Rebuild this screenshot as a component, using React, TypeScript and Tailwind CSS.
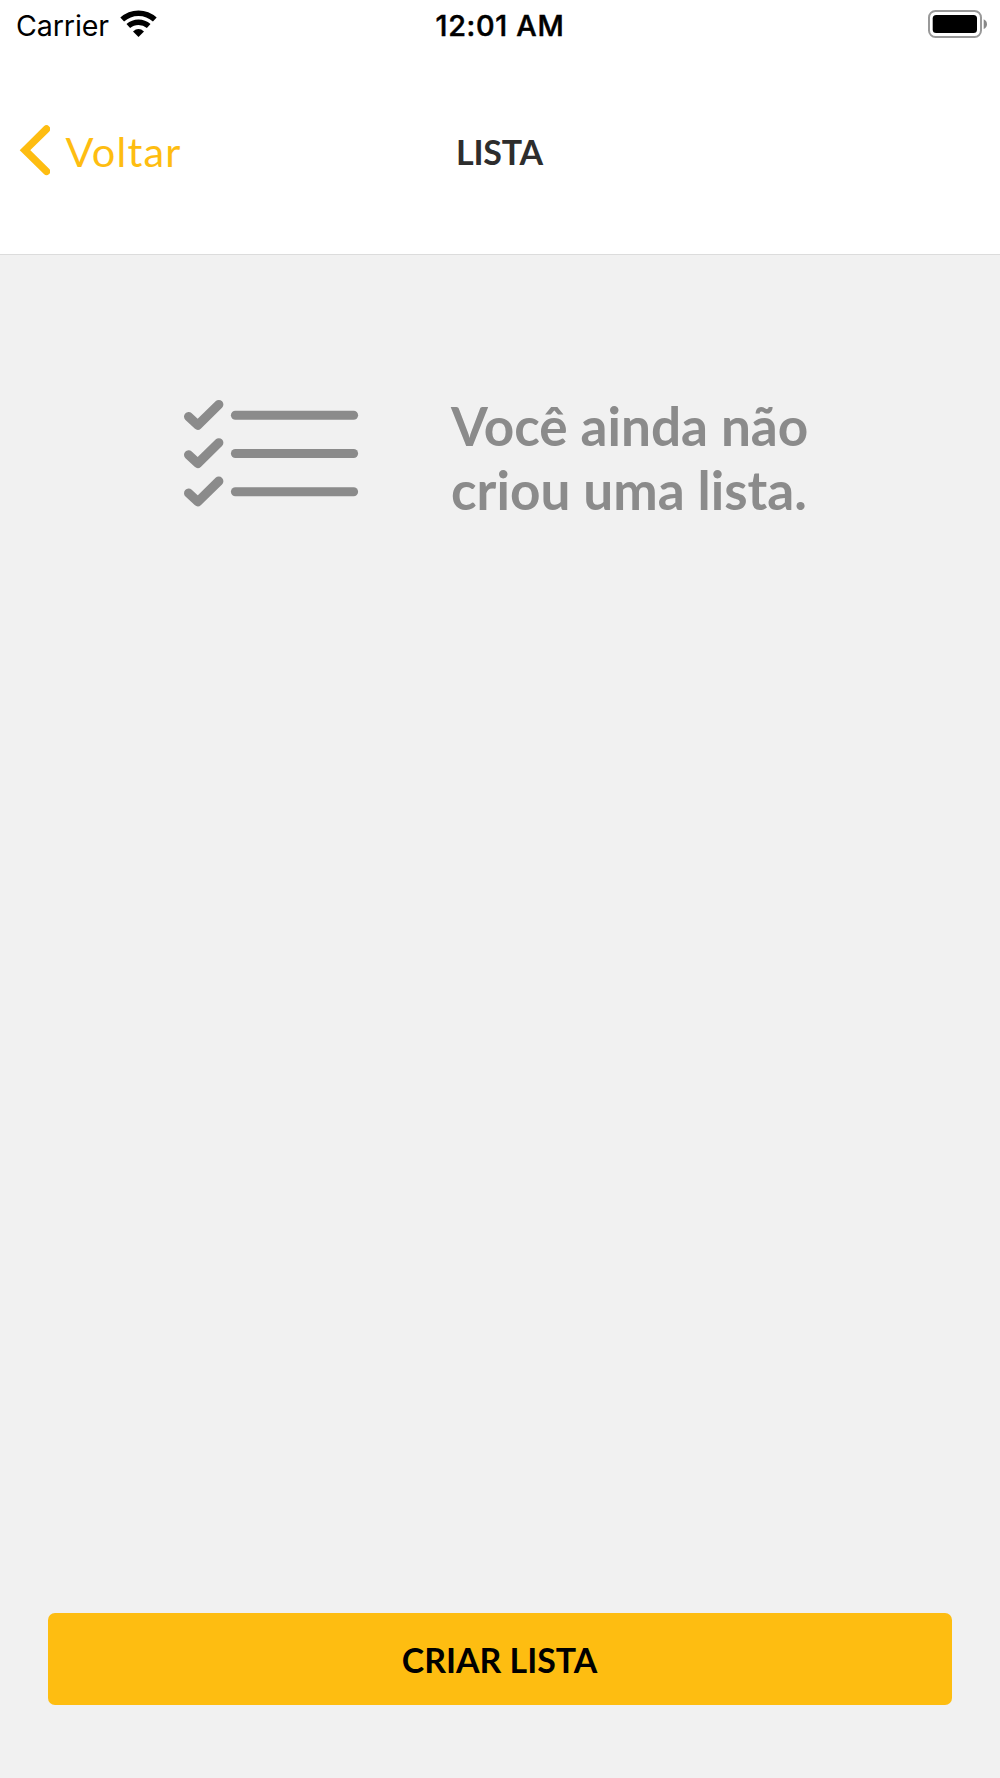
function StatusBar() {
  return (
    <div className="grid h-[50px] grid-cols-3 font-['Inter',sans-serif] text-black">
      <div className="flex items-start pl-[16px]">
        <span className="w-[93px] text-[28.6px] leading-[52px] tracking-[-0.1px]">Carrier</span>
        <svg className="mt-[10px] ml-[11px] h-[28px] w-[38px]" viewBox="0 0 38 28" fill="none" stroke="#000">
          <path d="M2.2 9.6A24 24 0 0 1 34.8 9.6" strokeWidth="5.5" />
          <path d="M8.3 16A15.5 15.5 0 0 1 28.7 16" strokeWidth="5.5" />
          <path d="M13 21.4Q18.5 16.6 24 21.4L18.5 27Z" fill="#000" stroke="none" />
        </svg>
      </div>
      <div className="text-center text-[28.8px] leading-[52px] font-medium tracking-[0.7px] [-webkit-text-stroke:0.5px_black]">12:01 AM</div>
      <div className="flex items-start justify-end pr-[12px]">
        <svg className="mt-[10px] h-[28px] w-[61px]" viewBox="0 0 61 28">
          <rect x="2" y="1" width="52" height="26" rx="6.5" fill="none" stroke="#999" strokeWidth="2" />
          <rect x="5.7" y="5" width="44.3" height="18" rx="3.5" fill="#000" />
          <path d="M56.7 9.3Q60 11 60 14.2T56.7 19Z" fill="#888" />
        </svg>
      </div>
    </div>
  );
}

function NavBar() {
  return (
    <nav className="grid h-[202px] grid-cols-3 items-center">
      <button className="flex items-center pl-[19px] text-[#febd11]">
        <svg className="h-[52px] w-[30.5px]" viewBox="0 0 30.5 52" fill="none" stroke="currentColor" strokeWidth="7.4">
          <path d="M27.5 4L6 25.2L27.5 46.4" strokeLinecap="round" strokeLinejoin="miter" />
        </svg>
        <span className="ml-[16px] text-[41.5px] leading-[50px] tracking-[1.2px]">Voltar</span>
      </button>
      <h1 className="pt-[2px] pr-[1px] text-center text-[34px] leading-[40px] font-bold tracking-[-0.25px] text-[#2d2d2d]">LISTA</h1>
    </nav>
  );
}

function ChecklistIcon() {
  return (
    <svg className="h-[112px] w-[178px] shrink-0" viewBox="0 0 178 112" fill="none" stroke="#8b8b8b" strokeLinecap="round">
      {[0, 38.3, 76.6].map((y) => (
        <g key={y} transform={`translate(0 ${y})`}>
          <path d="M6.6 18.6L15.8 27.1L36.8 6.5" strokeWidth="9.2" strokeLinejoin="round" />
          <path d="M53.4 17.2H171.6" strokeWidth="9" />
        </g>
      ))}
    </svg>
  );
}

export default function App() {
  return (
    <div className="flex h-[1778px] w-[1000px] flex-col bg-[#f1f1f1] font-['Lato',sans-serif]">
      <header className="h-[255px] border-b border-[#dcdcdc] bg-white">
        <StatusBar />
        <NavBar />
      </header>
      <main className="flex flex-1 flex-col justify-between px-[48px] pb-[73px]">
        <section className="flex items-start pt-[138px] pl-[134px]">
          <div className="pt-[5px]">
            <ChecklistIcon />
          </div>
          <p className="ml-[91px] pt-[1px] text-[53.1px] leading-[63.5px] font-bold whitespace-nowrap text-[#8b8b8b]">
            Você ainda não
            <br />
            criou uma lista.
          </p>
        </section>
        <button className="h-[92px] rounded-[7px] bg-[#febd11] pt-[2px] pr-[1px] text-[33.9px] font-bold text-black">
          CRIAR LISTA
        </button>
      </main>
    </div>
  );
}
